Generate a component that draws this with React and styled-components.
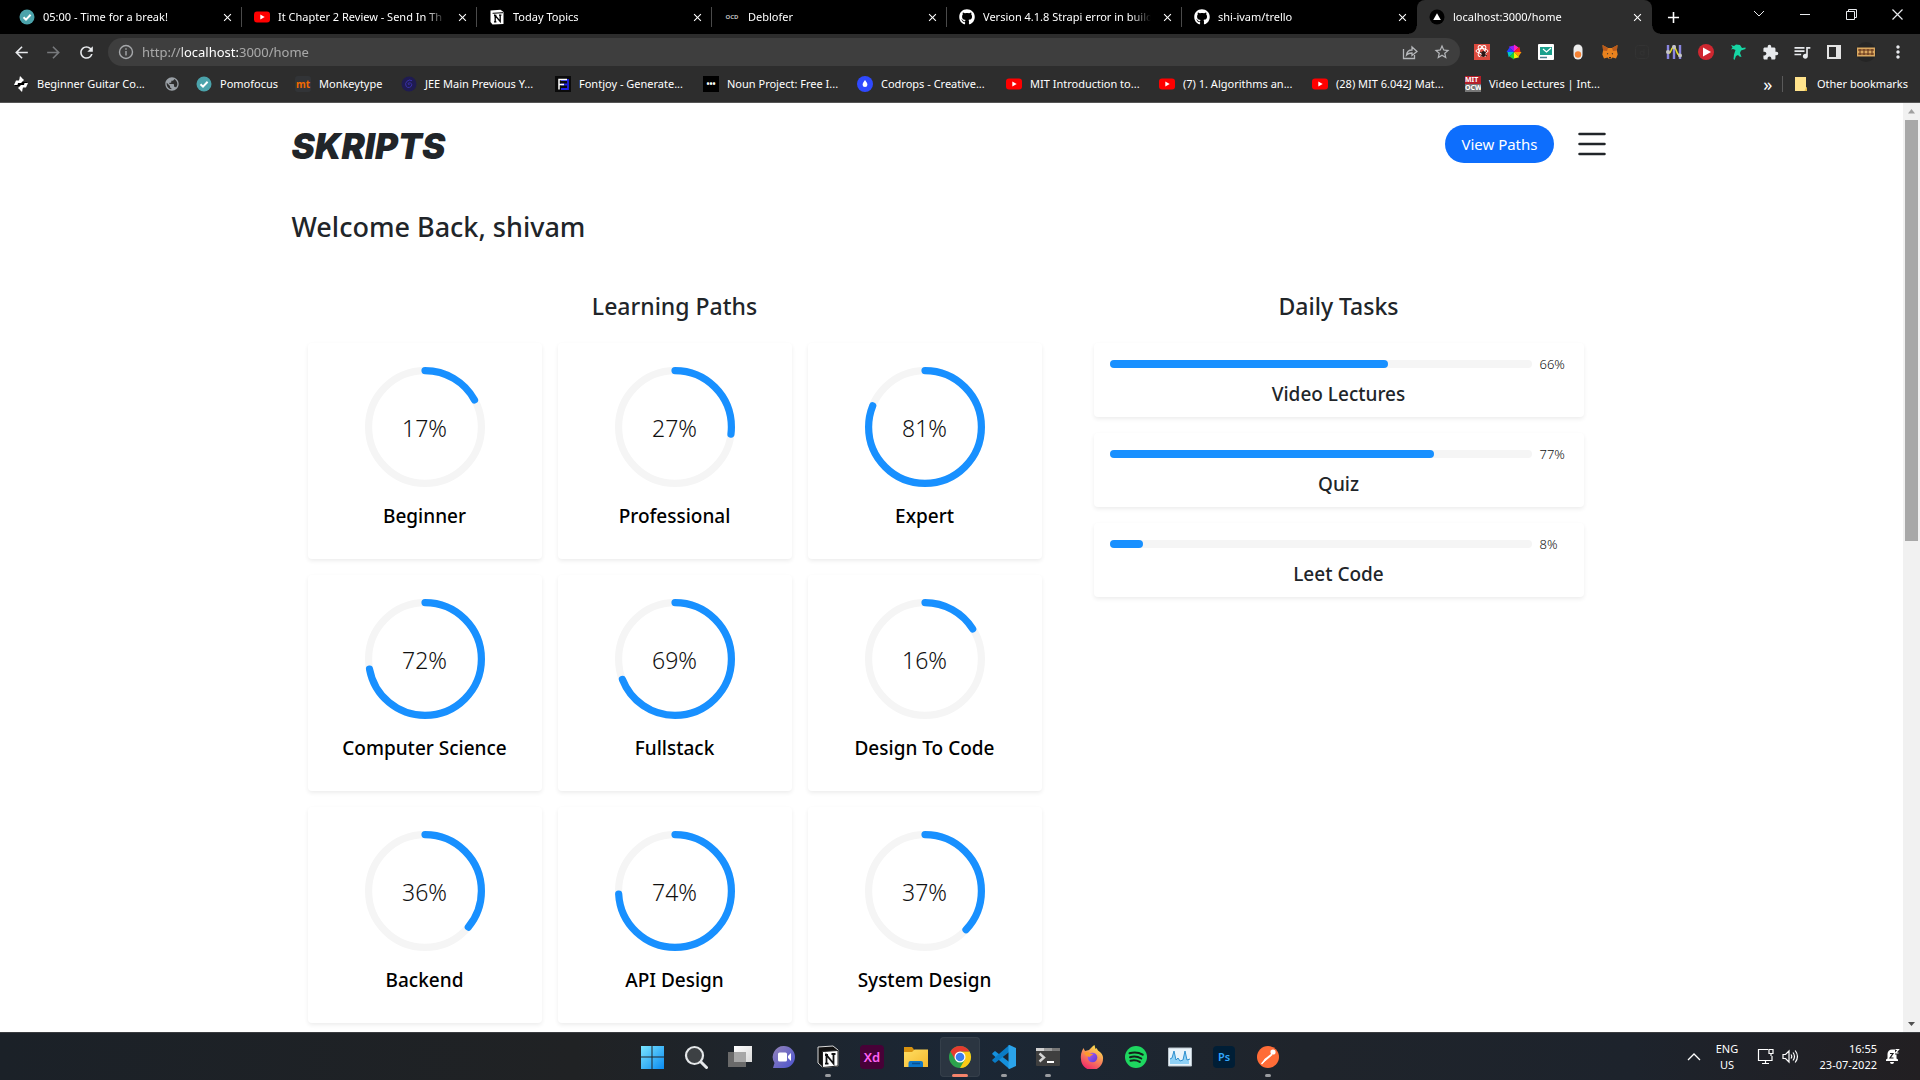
import React from "react";
import styled, { createGlobalStyle, css } from "styled-components";
import { FaGithub } from "react-icons/fa";
import { BsList } from "react-icons/bs";
import {
  MdArrowBack,
  MdArrowForward,
  MdRefresh,
  MdStarBorder,
  MdExtension,
  MdQueueMusic,
  MdMoreVert,
  MdClose,
  MdAdd,
  MdPublic,
} from "react-icons/md";

const uiFont = `"Segoe UI", "Noto Sans", "Open Sans", sans-serif`;

const GlobalStyle = createGlobalStyle`
  *, *::before, *::after { box-sizing: border-box; }
  body { margin: 0; background: #fff; font-family: ${uiFont}; color: #212529; }
  button { font: inherit; color: inherit; background: none; border: 0; padding: 0; cursor: pointer; }
  a { color: inherit; text-decoration: none; }
  h1, h2, h3, p, ul { margin: 0; padding: 0; font-weight: 500; }
  svg { display: block; flex: none; }
`;

const Desktop = styled.div`
  display: flex;
  flex-direction: column;
  height: 100vh;
  overflow: hidden;
`;

/* ---------- browser chrome ---------- */

const Chrome = styled.header`
  flex: none;
  background: #2d2d2d;
  border-bottom: 1px solid #555;
  color: #fff;
  font-size: 11px;
  line-height: 16px;
`;

const TabStrip = styled.div`
  display: flex;
  height: 34px;
  padding-left: 7px;
  background: #000;
`;

const flare = css`
  content: "";
  position: absolute;
  bottom: 0;
  width: 8px;
  height: 8px;
`;

const Tab = styled.div`
  position: relative;
  display: flex;
  align-items: center;
  gap: 8px;
  flex: 0 1 235px;
  min-width: 0;
  padding: 0 7px 0 12px;
  background: linear-gradient(#4a4a4a, #4a4a4a) right center / 1px 20px no-repeat;

  ${(p) =>
    p.$last &&
    css`
      background: none;
    `}

  ${(p) =>
    p.$active &&
    css`
      background: #2d2d2d;
      border-radius: 8px 8px 0 0;
      &::before {
        ${flare}
        left: -8px;
        background: radial-gradient(circle at 0 0, transparent 7px, #2d2d2d 8px);
      }
      &::after {
        ${flare}
        right: -8px;
        background: radial-gradient(circle at 100% 0, transparent 7px, #2d2d2d 8px);
      }
    `}
`;

const TabTitle = styled.button`
  flex: 1;
  min-width: 0;
  overflow: hidden;
  white-space: nowrap;
  text-align: left;
  mask-image: linear-gradient(90deg, #000 calc(100% - 20px), transparent);
`;

const IconButton = styled.button`
  display: grid;
  place-items: center;
  flex: none;
  width: ${(p) => p.$w || 16}px;
  height: ${(p) => p.$h || 16}px;
  color: ${(p) => p.$color || "#e8eaed"};
`;

const WindowControls = styled.div`
  display: flex;
  margin-left: auto;
`;

const Toolbar = styled.div`
  display: flex;
  align-items: center;
  height: 35px;
  padding: 1px 6px 0 5px;
`;

const NavButtons = styled.div`
  display: flex;
  width: 103px;
`;

const Omnibox = styled.label`
  display: flex;
  align-items: center;
  flex: 1;
  height: 28px;
  padding: 0 2px 0 10px;
  border-radius: 14px;
  background: #3e3e3e;
  color: #a6a8ab;
`;

/* The scheme and the path are dimmed; the host name stays at full strength. */
const UrlInput = styled.input`
  flex: 1;
  min-width: 0;
  margin-left: 8px;
  padding: 0;
  border: 0;
  outline: 0;
  background: transparent;
  color: #fff;
  font-family: ${uiFont};
  font-size: 13px;
  line-height: 20px;
  mask-image: linear-gradient(
    90deg,
    rgba(0, 0, 0, 0.55) 40px,
    #000 40px,
    #000 96px,
    rgba(0, 0, 0, 0.55) 96px
  );
`;

const Extensions = styled.div`
  display: flex;
  margin-left: 6px;
`;

const BookmarkBar = styled.nav`
  display: flex;
  align-items: center;
  height: 33px;
  padding: 0 12px 4px 13px;
`;

const Bookmark = styled.a`
  display: flex;
  align-items: center;
  gap: 8px;
  flex: 0 0 ${(p) => (p.$w ? `${p.$w}px` : "auto")};
  white-space: nowrap;
`;

const BookmarkTail = styled.div`
  display: flex;
  align-items: center;
  margin-left: auto;
  white-space: nowrap;
`;

const More = styled.button`
  width: 16px;
  font-size: 18px;
  line-height: 16px;
`;

const Rule = styled.i`
  width: 1px;
  height: 16px;
  margin: 0 10px 0 6px;
  background: #5a5a5a;
`;

const Favicon = styled.span`
  display: grid;
  place-items: center;
  flex: none;
  width: 16px;
  height: 16px;
  overflow: hidden;
  border-radius: ${(p) => p.$radius || 0};
  background: ${(p) => p.$bg || "transparent"};
  color: ${(p) => p.$color || "#fff"};
  font-size: ${(p) => p.$size || 8}px;
  line-height: 8px;
  font-weight: 700;
`;

/* ---------- page ---------- */

const Viewport = styled.div`
  display: flex;
  flex: 1;
  min-height: 0;
  background: #fff;
`;

const Scroller = styled.div`
  flex: 1;
  overflow: hidden;
`;

const Page = styled.div`
  max-width: 1320px;
  margin: 0 auto;
`;

const PageHeader = styled.div`
  display: flex;
  align-items: center;
  justify-content: space-between;
  height: 82px;
`;

const Logo = styled.a`
  padding-top: 3px;
  font: italic 900 35px/44px Inter, Lato, sans-serif;
`;

const HeaderActions = styled.div`
  display: flex;
  align-items: center;
  gap: 18px;
`;

const PrimaryButton = styled.button`
  height: 38px;
  padding: 0 16px;
  border-radius: 19px;
  background: #0d6efd;
  color: #fff;
  font-size: 15px;
  line-height: 24px;
`;

const MenuButton = styled.button`
  width: 40px;
  height: 40px;
`;

const Welcome = styled.h1`
  margin-top: 25px;
  font-size: 27px;
  line-height: 34px;
`;

const Columns = styled.div`
  display: grid;
  grid-template-columns: 766fr 522fr;
  align-items: start;
  gap: 20px;
  margin-top: 48px;
  padding-right: 12px;
`;

const SectionTitle = styled.h2`
  margin-bottom: 23px;
  font-size: 23px;
  line-height: 28px;
  text-align: center;
`;

const PathGrid = styled.div`
  display: grid;
  grid-template-columns: repeat(3, 1fr);
  gap: 16px;
  padding: 0 16px;
`;

const TaskList = styled.div`
  display: grid;
  gap: 16px;
  padding: 0 16px;
`;

const surface = css`
  border-radius: 4px;
  background: #fff;
  box-shadow: 0 2px 4px rgba(0, 0, 0, 0.075);
`;

const PathCard = styled.a`
  ${surface}
  display: flex;
  flex-direction: column;
  align-items: center;
  padding: 24px 0 31px;
  color: #000;
`;

const PathName = styled.h3`
  margin-top: 17px;
  font-size: 19px;
  line-height: 24px;
`;

const Gauge = styled.div`
  display: grid;
  place-items: center;
  width: 120px;
  height: 120px;
  > * {
    grid-area: 1 / 1;
  }
`;

const GaugeValue = styled.span`
  padding-top: 2px;
  color: #111;
  font-size: 23px;
  font-weight: 300;
  line-height: 24px;
`;

const TaskCard = styled.div`
  ${surface}
  padding: 10px 16px 11px;
`;

const Meter = styled.div`
  display: flex;
  align-items: center;
  gap: 8px;
  height: 22px;
`;

const Track = styled.div`
  flex: 1;
  height: 8px;
  border-radius: 4px;
  background: #f5f5f5;
`;

const Fill = styled.div`
  height: 8px;
  border-radius: 4px;
  background: #1890ff;
`;

const MeterValue = styled.span`
  width: 28px;
  color: #111;
  font-size: 13px;
  font-weight: 300;
  line-height: 16px;
`;

const TaskName = styled.h3`
  margin-top: 7px;
  font-size: 19px;
  line-height: 24px;
  text-align: center;
`;

const ScrollRail = styled.div`
  display: flex;
  flex-direction: column;
  align-items: center;
  justify-content: space-between;
  width: 17px;
  background: #f1f1f1;
`;

const Thumb = styled.div`
  width: 13px;
  flex: 0 0 421px;
  margin-bottom: auto;
  background: #a8a8a8;
`;

/* ---------- taskbar ---------- */

const Taskbar = styled.footer`
  display: grid;
  grid-template-columns: 1fr auto 1fr;
  flex: none;
  height: 48px;
  border-top: 1px solid #3a3c40;
  background: linear-gradient(90deg, #1b2128 0%, #202224 30%, #1b2735 50%, #1f242b 68%, #1d232c 85%, #221f22 100%);
  color: #fff;
`;

const Apps = styled.div`
  display: flex;
  grid-column: 2;
  align-items: center;
`;

const AppButton = styled.button`
  display: flex;
  flex-direction: column;
  align-items: center;
  justify-content: flex-end;
  gap: 5px;
  width: 40px;
  height: 40px;
  margin: 0 2px;
  border-radius: 4px;
  ${(p) =>
    p.$active &&
    css`
      background: #2b3541;
      box-shadow: 0 0 0 1px #353f4a inset;
    `}
`;

const Indicator = styled.i`
  width: ${(p) => (p.$state === "active" ? 16 : 6)}px;
  height: 3px;
  border-radius: 2px;
  background: ${(p) => (p.$state === "active" ? "#f5846b" : p.$state === "open" ? "#9a9ca0" : "transparent")};
`;

const Tray = styled.div`
  display: flex;
  align-items: center;
  justify-content: flex-end;
  padding-right: 20px;
  font-size: 11px;
  line-height: 16px;
`;

const Language = styled.button`
  width: 36px;
  margin: 0 12px 0 8px;
  text-align: center;
`;

const Clock = styled.button`
  width: 78px;
  margin: 0 8px 0 0;
  text-align: right;
`;

const TrayIcon = styled.button`
  margin-right: ${(p) => p.$gap || 0}px;
`;

/* ---------- icons ---------- */

const Check = () => (
  <svg width="16" height="16" viewBox="0 0 16 16">
    <circle cx="8" cy="8" r="7.5" fill="#4ba3ab" />
    <path d="M4.5 8.2 7 10.6l4.6-4.8" fill="none" stroke="#fff" strokeWidth="2" />
  </svg>
);
const YouTube = () => (
  <svg width="16" height="16" viewBox="0 0 16 16">
    <rect y="2.5" width="16" height="11" rx="3" fill="#f00" />
    <path d="m6.3 5.6 4.4 2.4-4.4 2.4Z" fill="#fff" />
  </svg>
);
const NotionSmall = () => (
  <svg width="16" height="16" viewBox="0 0 16 16">
    <path d="m1.5 1.5 10-.8 3 2.2v12l-11 .6-2-2.6Z" fill="#fff" />
    <path d="M3.6 4.3 14 3.7" stroke="#000" strokeWidth="1" />
    <path d="M6.2 12.8V6.5l5 6V6.3M5 6.5h2.4M5 12.8h2.4M10 6.2h2.4" fill="none" stroke="#000" strokeWidth="1.3" />
  </svg>
);
const Triangle = () => (
  <svg width="16" height="16" viewBox="0 0 16 16">
    <circle cx="8" cy="8" r="7.5" fill="#000" />
    <path d="m8 4.3 3.8 6.6H4.2Z" fill="#fff" />
  </svg>
);
const Knot = () => (
  <svg width="16" height="16" viewBox="0 0 16 16">
    <path d="M6 2h4v12H6ZM2 6h12v4H2Z" fill="#000" />
    <path d="M7 0 11 4 8 7H5L4.500 9H1l2-4.500h3Z" fill="#fff" />
    <path d="m9 16-4-4 3-3h3l.5-2H15l-2 4.500h-3Z" fill="#fff" />
  </svg>
);
const Swirl = () => (
  <svg width="16" height="16" viewBox="0 0 16 16">
    <circle cx="8" cy="8" r="7.5" fill="#1f1b52" />
    <path d="M8.5 8.5a1 1 0 0 1-1.5-1 2.2 2.2 0 0 1 3.8 1.3 3.2 3.2 0 0 1-5.6 1.6 4.2 4.2 0 0 1 5.8-5.7" fill="none" stroke="#3a31a8" />
  </svg>
);
const FontjoyIcon = () => (
  <svg width="16" height="16" viewBox="0 0 16 16">
    <path d="M0 0h16v16H0Z" fill="#0b0b0b" />
    <path d="M6 4h7v9H6M6 8.5h6" fill="none" stroke="#1d22e8" strokeWidth="1.8" />
    <path d="M4 13.5V3.5h8M4 8.5h5" fill="none" stroke="#fff" strokeWidth="1.5" />
  </svg>
);
const Drop = () => (
  <svg width="16" height="16" viewBox="0 0 16 16">
    <circle cx="8" cy="8" r="8" fill="#2f49ff" />
    <path d="M8 4c1.5 2 2.4 3.3 2.4 4.7a2.4 2.4 0 0 1-4.8 0C5.6 7.3 6.5 6 8 4Z" fill="#fff" />
  </svg>
);
const Folder = () => (
  <svg width="16" height="16" viewBox="0 0 16 16">
    <path d="M2 1h11v10l1 1v3H2Z" fill="#ffe38c" />
    <path d="M13 11.5 11.5 15H14v-3Z" fill="#e8bd45" />
  </svg>
);
const Info = () => (
  <svg width="16" height="16" viewBox="0 0 16 16" fill="none" stroke="currentColor" strokeWidth="1.4">
    <circle cx="8" cy="8" r="6.5" />
    <path d="M8 7v4.5M8 4.3v1.5" />
  </svg>
);
const Share = () => (
  <svg width="16" height="16" viewBox="0 0 16 16" fill="none" stroke="#b5b7ba" strokeWidth="1.3">
    <path d="M1.5 5v9.5h11V11" />
    <path d="M4.5 11c.4-3.5 2.5-5 5.5-5V3l5 4.5-5 4V9c-2.5 0-4.2.5-5.5 2Z" />
  </svg>
);
const ReactExt = () => (
  <svg width="16" height="16" viewBox="0 0 16 16">
    <path d="M0 0h16v16H0Z" fill="#dc4a3e" />
    <g fill="none" stroke="#fff">
      <ellipse cx="8" cy="7" rx="6" ry="2.4" />
      <ellipse cx="8" cy="7" rx="6" ry="2.4" transform="rotate(60 8 7)" />
      <ellipse cx="8" cy="7" rx="6" ry="2.4" transform="rotate(120 8 7)" />
    </g>
    <ellipse cx="9.5" cy="10" rx="2" ry="3" fill="#2a1513" />
    <path d="m6 8 7 4M6.5 12.5l6-5" stroke="#2a1513" />
  </svg>
);
const Wheel = () => {
  const colors = ["#ff20c0", "#ff2020", "#ff9a00", "#f4f000", "#20d030", "#00c8c8", "#2040ff", "#8a20ff"];
  return (
    <svg width="16" height="16" viewBox="-8 -8 16 16">
      {colors.map((c, i) => (
        <path key={c} d="M0 0V-7.5L4.6-4.6Z" fill={c} transform={`rotate(${i * 45})`} />
      ))}
    </svg>
  );
};
const MailExt = () => (
  <svg width="16" height="16" viewBox="0 0 16 16">
    <rect width="16" height="16" rx="1" fill="#fff" />
    <path d="M2 3h12v8H2Z" fill="#1aa08c" />
    <path d="m5 5 3.5 3L13 4" fill="none" stroke="#fff" strokeWidth="1.2" />
    <path d="M2 13.5h7" stroke="#4b7f8f" strokeWidth="1.5" />
  </svg>
);
const Egg = () => (
  <svg width="16" height="16" viewBox="0 0 16 16">
    <rect x="3.5" y=".5" width="9" height="15" rx="4.5" fill="#ececec" />
    <circle cx="8" cy="10.5" r="3.2" fill="#f58233" />
  </svg>
);
const Fox = () => (
  <svg width="16" height="16" viewBox="0 0 16 16">
    <path d="m.5 1 5.500 3h4l5.500-3-.6 5.500.8 4-1.700 4-3.500-1-1.500 1.500H7L5.500 13.500l-3.500 1-1.700-4 .8-4Z" fill="#e8821e" />
    <path d="m.5 1 5.500 3-1 3-3.900-.5Zm15 0L10 4l1 3 3.900-.5Z" fill="#b95a1c" />
    <path d="m5 9 1.500.8L5 10.500Zm6 0-1.500.8 1.500.7ZM7 13h2v1.500H7Z" fill="#2b2b2b" />
  </svg>
);
const Ghost = () => (
  <svg width="16" height="16" viewBox="0 0 16 16" fill="none" stroke="#333">
    <rect x="1.5" y="1.5" width="13" height="13" rx="3" />
    <path d="M10 5v6H8a2 2 0 1 1 2-2" />
  </svg>
);
const Sliders = () => (
  <svg width="16" height="16" viewBox="0 0 16 16" fill="none">
    <path d="M2 1v14M8 1v14M14 1v14" stroke="#8a86e0" strokeWidth="2.4" />
    <path d="M2 8C5 12 5 2 8 3s2 9 6 8" stroke="#e3dc2c" strokeWidth="1.5" />
    <g fill="#c6c6c6"><circle cx="2" cy="8" r="2" /><circle cx="8" cy="3" r="2" /><circle cx="14" cy="11.5" r="2" /></g>
  </svg>
);
const PlayExt = () => (
  <svg width="16" height="16" viewBox="0 0 16 16">
    <circle cx="8" cy="8" r="8" fill="#cf2730" />
    <path d="m5 3.5 8 4.5-8 4.5Z" fill="#fff" />
  </svg>
);
const Dino = () => (
  <svg width="16" height="16" viewBox="0 0 16 16">
    <path d="m1 1 3 1L6 .5l4 .5 2 3 3.500-.5v1.500L11 6.500 10 9l1.500 4-2-.5L8 11l-2 1-1.500 4-1-1L4 10.500 5.500 6 3 5 1 5.500l1.500-2Z" fill="#16d6a4" />
  </svg>
);
const SidePanel = () => (
  <svg width="16" height="16" viewBox="0 0 16 16">
    <path d="M1 1h14v14H1Zm2 2v10h7V3Z" fill="#e4e4e4" fillRule="evenodd" />
  </svg>
);

const grad = (id, a, b, props = {}) => (
  <linearGradient id={id} x1="0" y1="0" x2="1" y2="1" {...props}>
    <stop offset="0" stopColor={a} />
    <stop offset="1" stopColor={b} />
  </linearGradient>
);

const Windows = () => (
  <svg width="24" height="24" viewBox="0 0 24 24">
    <defs>{grad("win", "#7fe9ff", "#0a8af0", { gradientUnits: "userSpaceOnUse", x2: 24, y2: 24 })}</defs>
    <path d="M1 1h10.500v10.500H1Zm11.500 0H24v10.500H12.500ZM1 12.500h10.500V24H1Zm11.500 0H24V24H12.500Z" fill="url(#win)" />
  </svg>
);
const Search = () => (
  <svg width="24" height="24" viewBox="0 0 24 24" fill="#3d4144" stroke="#e4e7e9">
    <circle cx="10.5" cy="10.5" r="8.5" strokeWidth="2.2" />
    <path d="m17 17 5.500 5.500" strokeWidth="3" strokeLinecap="round" />
  </svg>
);
const TaskView = () => (
  <svg width="24" height="24" viewBox="0 0 24 24">
    <defs>{grad("tv", "#fff", "#d8d8d8")}</defs>
    <path d="M6 1h18v16H6Z" fill="url(#tv)" />
    <path d="M0 7h18v15H0Z" fill="#6a6a6a" />
    <path d="M6 7h12v10H6Z" fill="#a7a7a7" />
  </svg>
);
const Meet = () => (
  <svg width="24" height="24" viewBox="0 0 24 24">
    <defs>{grad("meet", "#9584b8", "#4a52d0")}</defs>
    <path d="M12 1a11 11 0 1 1 0 22H1l1.500-5A11 11 0 0 1 12 1Z" fill="url(#meet)" />
    <rect x="6" y="7.5" width="9" height="9" rx="1.5" fill="#fff" />
    <path d="m16 11 3-3v8l-3-3Z" fill="#fff" />
  </svg>
);
const Notion = () => (
  <svg width="24" height="24" viewBox="0 0 24 24">
    <path d="m2 2 15-1 5 4v16l-15 1.500L2 18Z" fill="#111" stroke="#d9d9d9" strokeWidth="1" />
    <path d="M6.500 6.500 22 5.500V21L6.500 22.500Z" fill="#fff" stroke="#222" />
    <path d="M10.500 18.500V10l7 8.500V9M9 10h3M9 18.700h3.500M15.500 9h4" fill="none" stroke="#111" strokeWidth="1.8" />
  </svg>
);
const FileExplorer = () => (
  <svg width="24" height="24" viewBox="0 0 24 24">
    <defs>{grad("fe", "#ffdf63", "#f5b82e")}</defs>
    <path d="M0 2h8l2 2.500V8H0Z" fill="#d8920f" />
    <path d="M0 7h8l2.500-2.500H24V22H0Z" fill="url(#fe)" />
    <path d="M4.500 22v-4a2 2 0 0 1 2-2H17a2 2 0 0 1 2 2v4Z" fill="#0d76c9" />
    <path d="M8 18.500h8" stroke="#0a4f8e" strokeWidth="1.5" />
  </svg>
);
const ChromeIcon = () => (
  <svg width="24" height="24" viewBox="-12 -12 24 24">
    <circle r="11" fill="#2ca24c" />
    <path d="M9.530-5.500A11 11 0 0 1 0 11L4.760 2.750 0-5.500Z" fill="#fbc916" />
    <path d="M-9.530-5.500A11 11 0 0 1 9.530-5.500H0L-4.760 2.750Z" fill="#e63b2e" />
    <circle r="5.5" fill="#fff" />
    <circle r="4.3" fill="#3b7ded" />
  </svg>
);
const Code = () => (
  <svg width="24" height="24" viewBox="0 0 24 24">
    <path d="M17.500 24v-6.800L3 6 .3 8.300v1L17 23.700Z" fill="#1590dc" />
    <path d="M17.500 0v6.800L3 18l-2.700-2.300v-1L17 .3Z" fill="#0a7cc6" />
    <path d="M17.500 0 24 3v18l-6.500 3-1-.5V.5Z" fill="#2ba3ea" />
  </svg>
);
const Terminal = () => (
  <svg width="24" height="24" viewBox="0 0 24 24">
    <rect y="3" width="24" height="18" rx="1" fill="#3f3f3f" />
    <path d="M0 3h8v3H0Z" fill="#d0d0d0" />
    <path d="M8 3h8v3H8Z" fill="#9b9b9b" />
    <path d="M16 3h8v3h-8Z" fill="#777" />
    <path d="m3.500 8.500 4.500 4-4.500 4" fill="none" stroke="#d5d5d5" strokeWidth="2.4" />
    <path d="M11 17h7" stroke="#fff" strokeWidth="2" />
  </svg>
);
const Firefox = () => (
  <svg width="24" height="24" viewBox="0 0 24 24">
    <defs>
      {grad("ff", "#fff04a", "#f0246a", { x1: 0.8, y1: 0, x2: 0.3, y2: 1 })}
      {grad("fx", "#b05cf0", "#5a3ad8")}
    </defs>
    <path d="M2 6 3.500 3l1.500 3 4-1 4-4 1.500-1 1 4 1-1 1.500 2.500C22 8 23.500 11 23 14a11 11 0 0 1-22 0C.5 11 1 8.500 2 6Z" fill="url(#ff)" />
    <circle cx="12.5" cy="12.5" r="4.8" fill="url(#fx)" />
    <path d="M4 8c3-2 5-1 6.500.8l2.500.2c-.5 1.500-3 1.500-3 3-2.500-.5-4.500-1-6-4Z" fill="#ff9a2a" />
  </svg>
);
const PerfMon = () => (
  <svg width="24" height="24" viewBox="0 0 24 24">
    <path d="M.5 3h23v18H.5Z" fill="#e9f3fa" stroke="#b9c4cc" />
    <path d="M2 19v-5l2-1 2-7 2 9 2-2 2 3 3-1 2-9 2 9 2-1v5Z" fill="#8fd0f5" />
    <path d="m2 14 2-1 2-7 2 9 2-2 2 3 3-1 2-9 2 9 3-1" fill="none" stroke="#2f8fce" />
  </svg>
);
const PostmanIcon = () => (
  <svg width="24" height="24" viewBox="0 0 24 24">
    <circle cx="12" cy="12" r="11" fill="#ff6c37" />
    <circle cx="17" cy="7" r="2.6" fill="#fff" />
    <path d="m15.500 8.500 1 1.500L10 15.500l-4 3 2.500-4.500Z" fill="#fff" />
    <path d="m10 14-4.500 5" stroke="#fff" strokeWidth="1.4" />
  </svg>
);
const SpotifyIcon = () => (
  <svg width="24" height="24" viewBox="0 0 24 24">
    <circle cx="12" cy="12" r="11" fill="#1ed760" />
    <path d="M5.500 8.300c4.500-1.300 9.500-.8 13.200 1.400M6 12.200c4-1.100 8-.6 11.300 1.300M6.500 15.800c3.300-.9 6.500-.5 9.300 1.100" fill="none" stroke="#15211a" strokeWidth="2" strokeLinecap="round" />
  </svg>
);

const AdobeTile = styled.span`
  display: grid;
  place-items: center;
  width: ${(p) => p.$size}px;
  height: ${(p) => p.$size}px;
  margin: ${(p) => (24 - p.$size) / 2}px 0;
  border-radius: 4px;
  background: ${(p) => p.$bg};
  color: ${(p) => p.$color};
  font-size: ${(p) => p.$font}px;
  line-height: 16px;
  font-weight: 600;
`;

/* ---------- data ---------- */

const tabs = [
  { title: "05:00 - Time for a break!", icon: <Check /> },
  { title: "It Chapter 2 Review - Send In Th", icon: <YouTube /> },
  { title: "Today Topics", icon: <NotionSmall /> },
  { title: "Deblofer", icon: <Favicon $size={6} $color="#bbb">OCD</Favicon> },
  { title: "Version 4.1.8 Strapi error in build", icon: <FaGithub size={16} /> },
  { title: "shi-ivam/trello", icon: <FaGithub size={16} />, last: true },
  { title: "localhost:3000/home", icon: <Triangle />, active: true },
];

const bookmarks = [
  { label: "Beginner Guitar Co...", icon: <Knot />, w: 151 },
  { label: "", aria: "Web page", icon: <MdPublic size={16} color="#9aa0a6" />, w: 32 },
  { label: "Pomofocus", icon: <Check />, w: 99 },
  { label: "Monkeytype", icon: <Favicon $bg="#323437" $color="#f06a00" $size={10} $radius="3px">mt</Favicon>, w: 106 },
  { label: "JEE Main Previous Y...", icon: <Swirl />, w: 154 },
  { label: "Fontjoy - Generate...", icon: <FontjoyIcon />, w: 148 },
  { label: "Noun Project: Free I...", icon: <Favicon $bg="#000" $size={8}>•••</Favicon>, w: 154 },
  { label: "Codrops - Creative...", icon: <Drop />, w: 149 },
  { label: "MIT Introduction to...", icon: <YouTube />, w: 153 },
  { label: "(7) 1. Algorithms an...", icon: <YouTube />, w: 153 },
  { label: "(28) MIT 6.042J Mat...", icon: <YouTube />, w: 153 },
  {
    label: "Video Lectures | Int...",
    icon: (
      <Favicon $bg="linear-gradient(#b5202a 50%, #777 50%)" $size={7}>
        MIT
        <br />
        OCW
      </Favicon>
    ),
    w: 153,
  },
];

const ProfileBadge = () => (
  <svg width="20" height="20" viewBox="0 0 20 20">
    <circle cx="10" cy="10" r="10" fill="#252525" />
    <rect x="1" y="5.5" width="18" height="9" fill="#d9a860" />
    <path d="M2 8h16M2 12h16M4 7v6M8 7v6M12 7v6M16 7v6" fill="none" stroke="#5d2c17" />
  </svg>
);

const extensions = [
  ["React extension", <ReactExt />],
  ["Color picker", <Wheel />],
  ["Mail tracker", <MailExt />],
  ["Toggle", <Egg />],
  ["MetaMask", <Fox />],
  ["Disabled extension", <Ghost />],
  ["Equalizer", <Sliders />],
  ["Player", <PlayExt />],
  ["Dino", <Dino />],
  ["Extensions", <MdExtension size={17} />],
  ["Media controls", <MdQueueMusic size={20} />],
  ["Side panel", <SidePanel />],
  ["Profile", <ProfileBadge />],
  ["Menu", <MdMoreVert size={20} />],
];

const paths = [
  ["Beginner", 17],
  ["Professional", 27],
  ["Expert", 81],
  ["Computer Science", 72],
  ["Fullstack", 69],
  ["Design To Code", 16],
  ["Backend", 36],
  ["API Design", 74],
  ["System Design", 37],
];

const tasks = [
  ["Video Lectures", 66],
  ["Quiz", 77],
  ["Leet Code", 8],
];

const apps = [
  ["Start", <Windows />],
  ["Search", <Search />],
  ["Task view", <TaskView />],
  ["Chat", <Meet />],
  ["Notion", <Notion />, "open"],
  ["Adobe XD", <AdobeTile $size={24} $bg="#470137" $color="#ff61f6" $font={13}>Xd</AdobeTile>],
  ["File Explorer", <FileExplorer />],
  ["Chrome", <ChromeIcon />, "active"],
  ["Visual Studio Code", <Code />, "open"],
  ["Terminal", <Terminal />, "open"],
  ["Firefox", <Firefox />],
  ["Spotify", <SpotifyIcon />],
  ["Performance Monitor", <PerfMon />],
  ["Photoshop", <AdobeTile $size={22} $bg="#001e36" $color="#31a8ff" $font={11}>Ps</AdobeTile>],
  ["Postman", <PostmanIcon />, "open"],
];

/* ---------- parts ---------- */

const RADIUS = 56.4;
const LENGTH = 2 * Math.PI * RADIUS;

function ProgressRing({ value }) {
  return (
    <Gauge role="img" aria-label={`${value}%`}>
      <svg width="120" height="120" viewBox="0 0 120 120" fill="none" strokeWidth="7.2">
        <circle cx="60" cy="60" r={RADIUS} stroke="#f5f5f5" />
        <circle
          cx="60"
          cy="60"
          r={RADIUS}
          stroke="#1890ff"
          strokeLinecap="round"
          strokeDasharray={`${(LENGTH * value) / 100} ${LENGTH}`}
          transform="rotate(-90 60 60)"
        />
      </svg>
      <GaugeValue>{value}%</GaugeValue>
    </Gauge>
  );
}

function BrowserChrome() {
  return (
    <Chrome>
      <TabStrip>
        {tabs.map((t) => (
          <Tab key={t.title} $active={t.active} $last={t.last}>
            {t.icon}
            <TabTitle>{t.title}</TabTitle>
            <IconButton aria-label={`Close ${t.title}`} $color="#fff">
              <MdClose size={13} />
            </IconButton>
          </Tab>
        ))}
        <IconButton aria-label="New tab" $w={42} $h={34} $color="#fff">
          <MdAdd size={19} />
        </IconButton>
        <WindowControls>
          <IconButton aria-label="Search tabs" $w={46} $h={28}>
            <svg width="12" height="12" fill="none" stroke="currentColor"><path d="m1 3 5 5 5-5" /></svg>
          </IconButton>
          <IconButton aria-label="Minimize" $w={46} $h={28}>
            <svg width="10" height="10" stroke="currentColor"><path d="M0 5.500h10" /></svg>
          </IconButton>
          <IconButton aria-label="Restore" $w={46} $h={28}>
            <svg width="11" height="11" fill="none" stroke="currentColor"><path d="M.5 2.500h8v8h-8ZM2.500 2.500v-2h8v8h-2" /></svg>
          </IconButton>
          <IconButton aria-label="Close window" $w={46} $h={28}>
            <svg width="11" height="11" stroke="currentColor" strokeWidth="1.2"><path d="m.5.5 10 10m0-10-10 10" /></svg>
          </IconButton>
        </WindowControls>
      </TabStrip>
      <Toolbar>
        <NavButtons>
          <IconButton aria-label="Back" $w={32} $h={28}><MdArrowBack size={19} /></IconButton>
          <IconButton aria-label="Forward" $w={33} $h={28} $color="#77797c"><MdArrowForward size={19} /></IconButton>
          <IconButton aria-label="Reload" $w={32} $h={28}><MdRefresh size={19} /></IconButton>
        </NavButtons>
        <Omnibox>
          <Info />
          <UrlInput aria-label="Address" defaultValue="http://localhost:3000/home" spellCheck={false} />
          <IconButton aria-label="Share" $w={32} $h={28}><Share /></IconButton>
          <IconButton aria-label="Bookmark this page" $w={32} $h={28} $color="#b5b7ba"><MdStarBorder size={18} /></IconButton>
        </Omnibox>
        <Extensions>
          {extensions.map(([name, icon]) => (
            <IconButton key={name} aria-label={name} $w={32} $h={28}>
              {icon}
            </IconButton>
          ))}
        </Extensions>
      </Toolbar>
      <BookmarkBar aria-label="Bookmarks">
        {bookmarks.map((b) => (
          <Bookmark key={b.label} href="#" aria-label={b.aria} $w={b.w}>
            {b.icon}
            {b.label}
          </Bookmark>
        ))}
        <BookmarkTail>
          <More aria-label="More bookmarks">»</More>
          <Rule />
          <Bookmark as="button">
            <Folder />
            Other bookmarks
          </Bookmark>
        </BookmarkTail>
      </BookmarkBar>
    </Chrome>
  );
}

function Dashboard() {
  return (
    <Page>
      <PageHeader>
        <Logo href="#">SKRIPTS</Logo>
        <HeaderActions>
          <PrimaryButton>View Paths</PrimaryButton>
          <MenuButton aria-label="Menu">
            <BsList size={40} />
          </MenuButton>
        </HeaderActions>
      </PageHeader>
      <Welcome>Welcome Back, shivam</Welcome>
      <Columns>
        <section>
          <SectionTitle>Learning Paths</SectionTitle>
          <PathGrid>
            {paths.map(([name, value]) => (
              <PathCard key={name} href="#">
                <ProgressRing value={value} />
                <PathName>{name}</PathName>
              </PathCard>
            ))}
          </PathGrid>
        </section>
        <section>
          <SectionTitle>Daily Tasks</SectionTitle>
          <TaskList>
            {tasks.map(([name, value]) => (
              <TaskCard key={name}>
                <Meter>
                  <Track>
                    <Fill style={{ width: `${value}%` }} />
                  </Track>
                  <MeterValue>{value}%</MeterValue>
                </Meter>
                <TaskName>{name}</TaskName>
              </TaskCard>
            ))}
          </TaskList>
        </section>
      </Columns>
    </Page>
  );
}

function SystemTaskbar() {
  return (
    <Taskbar>
      <Apps>
        {apps.map(([name, icon, state]) => (
          <AppButton key={name} aria-label={name} $active={state === "active"}>
            {icon}
            <Indicator $state={state} />
          </AppButton>
        ))}
      </Apps>
      <Tray>
        <TrayIcon aria-label="Show hidden icons">
          <svg width="14" height="14" fill="none" stroke="#fff" strokeWidth="1.3"><path d="m1 10 6-6 6 6" /></svg>
        </TrayIcon>
        <Language>
          ENG
          <br />
          US
        </Language>
        <TrayIcon aria-label="Network" $gap={8}>
          <svg width="17" height="17" fill="none" stroke="#fff" strokeWidth="1.2">
            <path d="M11 1.500H1.500v11H15V8M5 15.500h7M8.500 12.500v3M12 1.500h4v4h-4ZM14 5.500V8" />
          </svg>
        </TrayIcon>
        <TrayIcon aria-label="Volume">
          <svg width="17" height="17" fill="none" stroke="#fff" strokeWidth="1.2">
            <path d="M1 6.500h2.500L7 3v11l-3.500-3.500H1ZM9 6.500q1.500 2 0 4M11 4.500q3 4 0 8M13.200 2.500q4.500 6 0 12" />
          </svg>
        </TrayIcon>
        <Clock>
          16:55
          <br />
          23-07-2022
        </Clock>
        <TrayIcon aria-label="Notifications">
          <svg width="15" height="17">
            <path d="M1 13V11.500l1.500-1V6A4.500 4.500 0 0 1 7 1.500h3v5h1.500v4L13 11.500V13ZM5 14h4a2 2 0 0 1-4 0Z" fill="#fff" />
            <path d="M5 5.500h3L5 10h3.500" fill="none" stroke="#1d1d20" strokeWidth="1.2" />
            <path d="M10.500 1.500h3l-3 3.500h3" fill="none" stroke="#fff" strokeWidth="1.2" />
          </svg>
        </TrayIcon>
      </Tray>
    </Taskbar>
  );
}

export default function App() {
  return (
    <Desktop>
      <GlobalStyle />
      <BrowserChrome />
      <Viewport>
        <Scroller>
          <Dashboard />
        </Scroller>
        <ScrollRail>
          <svg width="17" height="17"><path d="m8.500 6 3.500 4.500H5Z" fill="#a0a0a0" /></svg>
          <Thumb />
          <svg width="17" height="17"><path d="M5 7h7l-3.500 4Z" fill="#505050" /></svg>
        </ScrollRail>
      </Viewport>
      <SystemTaskbar />
    </Desktop>
  );
}
